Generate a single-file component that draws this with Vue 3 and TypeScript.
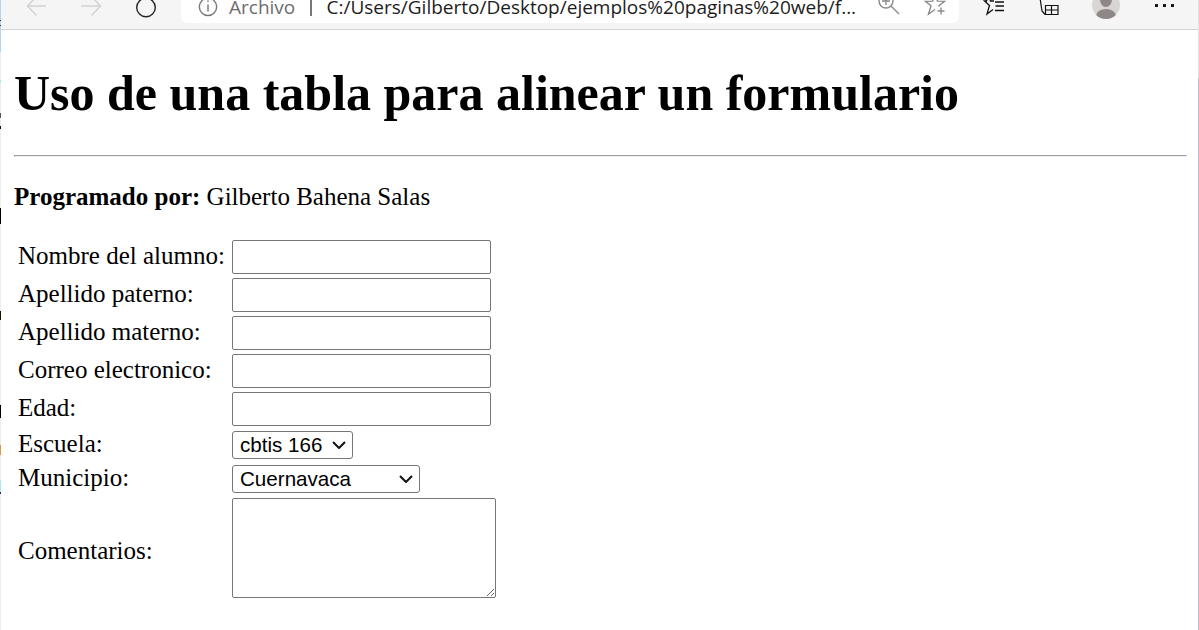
<script setup lang="ts">
interface Row { label: string }
const rows: Row[] = [
  { label: 'Nombre del alumno:' },
  { label: 'Apellido paterno:' },
  { label: 'Apellido materno:' },
  { label: 'Correo electronico:' },
  { label: 'Edad:' },
]
</script>

<template>
  <div class="window">
    <header class="toolbar">
      <svg class="ic nav back" width="26" height="29" viewBox="24 0 26 29"><path d="M46 6H28M36.500 -3.500L27.500 6l9 9.500" /></svg>
      <svg class="ic nav fwd" width="26" height="29" viewBox="78 0 26 29"><path d="M81 6h19M91.500 -3.500l9 9.500-9 9.500" /></svg>
      <svg class="ic reload" width="24" height="29" viewBox="134 0 24 29"><circle cx="146" cy="7.500" r="9.300" /></svg>
      <div class="omnibox">
        <svg class="ic info" width="24" height="29" viewBox="196 0 24 29"><circle cx="208" cy="6.800" r="8.700" /><path d="M208 4.500v7M208 0.500v1.600" /></svg>
        <span class="origin">Archivo</span>
        <span class="sep"></span>
        <span class="url">C:/Users/Gilberto/Desktop/ejemplos%20paginas%20web/f...</span>
        <svg class="ic zoom" width="25" height="29" viewBox="875 0 25 29"><circle cx="885" cy="1" r="7" /><path d="M890 6l8 8M885 -3v8M881 1h8" /></svg>
        <svg class="ic star" width="24" height="29" viewBox="922 0 24 29"><path d="M938.300 6.500L938 5.800L943.500 1.400L936.500 1.100L934 -5.500L931.500 1.100L924.500 1.400L930 5.800L927.500 14L934 9.500" /><path d="M940 7.500v7M936.500 11h7" /></svg>
      </div>
      <svg class="ic fav" width="25" height="29" viewBox="982 0 25 29"><path d="M994 1h-3.500L988.500 -6L986.500 1H984.500L989.500 5.500L987 14L993 9.500" /><path d="M995 2h9M995.500 6h8.500M995 10.500h9" /></svg>
      <svg class="ic coll" width="24" height="29" viewBox="1037 0 24 29"><path d="M1040 -2l2 13 3 3.500" /><path d="M1045.500 5.500h12.500v9h-12.500zM1051.500 6v8M1046 10h11.500" /></svg>
      <div class="avatar"><i class="head"></i><i class="body"></i></div>
      <div class="dots"><i></i><i></i><i></i></div>
    </header>

    <main class="page">
      <h1>Uso de una tabla para alinear un formulario</h1>
      <hr />
      <p class="byline"><b>Programado por:</b> Gilberto Bahena Salas</p>
      <form class="form">
        <label v-for="row in rows" :key="row.label" class="row">
          <span class="lab">{{ row.label }}</span>
          <input type="text" />
        </label>
        <label class="row sel">
          <span class="lab">Escuela:</span>
          <span class="select-wrap">
            <select class="narrow"><option>cbtis 166</option></select>
            <svg class="chev" width="14" height="8" viewBox="0 0 14 8"><path d="M1 1l6 6 6-6" /></svg>
          </span>
        </label>
        <label class="row sel">
          <span class="lab">Municipio:</span>
          <span class="select-wrap">
            <select class="wide"><option>Cuernavaca</option></select>
            <svg class="chev" width="14" height="8" viewBox="0 0 14 8"><path d="M1 1l6 6 6-6" /></svg>
          </span>
        </label>
        <label class="row area">
          <span class="lab">Comentarios:</span>
          <textarea></textarea>
        </label>
      </form>
    </main>
  </div>
</template>

<style>
html, body { margin: 0; background: #fff; overflow: hidden; }
</style>

<style scoped>
.window {
  position: relative;
  width: 1199px;
  height: 630px;
  overflow: hidden;
  box-sizing: border-box;
  padding: 0 1px;
  font-family: "Liberation Serif", serif;
  color: #000;
}
.window::before {
  content: "";
  position: absolute;
  left: 0;
  top: 0;
  width: 1px;
  height: 630px;
  background: linear-gradient(to bottom,
    #b3d4f0 0 20px, #333 20px 21px, #b3d4f0 21px 25px, #333 25px 26px, #b3d4f0 26px 52px,
    #eee 52px 80px, #a8ecf2 80px 83px, #eee 83px 113px, #555 113px 118px, #eee 118px 126px,
    #111 126px 129px, #eee 129px 208px, #000 208px 224px, #eee 224px 311px, #1a1000 311px 320px,
    #eee 320px 405px, #000 405px 418px, #eee 418px 445px, #d89a40 445px 455px, #eee 455px 480px,
    #a8ecf2 480px 492px, #234 492px 494px, #eee 494px 630px);
}
.window::after {
  content: "";
  position: absolute;
  right: 0;
  top: 0;
  width: 1px;
  height: 630px;
  background: linear-gradient(to bottom, #e6e2e2 0 78px, #b8bcc4 78px 630px);
}
.toolbar {
  height: 30px;
  box-sizing: border-box;
  border-bottom: 1px solid #d2d2d2;
  background: #f5f5f5;
  display: flex;
  align-items: flex-start;
  overflow: hidden;
}
.ic { flex: none; fill: none; stroke: #222; stroke-width: 1.4; }
.nav { stroke: #d2d2d2; }
.back { margin-left: 23px; }
.fwd { margin-left: 28px; }
.reload { margin-left: 30px; }
.omnibox {
  margin-left: 23px;
  width: 778px;
  height: 23px;
  background: #fff;
  border-radius: 0 0 6px 6px;
  display: flex;
  align-items: flex-start;
  font-family: "Open Sans", sans-serif;
  font-size: 19px;
  line-height: 14px;
  white-space: nowrap;
  flex: none;
}
.info { stroke: #777; margin-left: 15px; }
.origin { color: #6d6d6d; margin-left: 9px; width: 68px; flex: none; }
.sep { width: 1.5px; height: 16px; background: #777; margin-left: 13px; flex: none; }
.url { color: #1c1c1c; margin-left: 15px; width: 530px; flex: none; }
.zoom { stroke: #8a8a8a; margin-left: 19px; }
.star { stroke: #8a8a8a; margin-left: 22px; }
.fav { margin-left: 23px; stroke-width: 1.3; stroke: #111; }
.coll { margin-left: 30px; stroke-width: 1.2; stroke: #111; }
.avatar {
  margin-left: 31px;
  margin-top: -9px;
  width: 28px;
  height: 28px;
  border-radius: 50%;
  background: #d8d6d4;
  flex: none;
  overflow: hidden;
  display: flex;
  flex-direction: column;
  align-items: center;
}
.head { width: 12px; height: 16px; border-radius: 50%; background: #8d8886; flex: none; }
.body { width: 20px; height: 14px; border-radius: 50% 50% 45% 45%; background: #8d8886; margin-top: 2px; flex: none; }
.dots { display: flex; gap: 5px; margin-left: 35px; margin-top: 4px; }
.dots i { width: 3px; height: 3px; background: #1a1a1a; }

.page { padding: 0 11px 0 13px; }
h1 {
  margin: 35px 0 0;
  font-size: 50px;
  line-height: 57px;
  font-weight: 700;
}
hr {
  margin: 33px 0 0;
  height: 0;
  border-style: solid;
  border-width: 1px;
  border-color: #9d9d9d #eee #eee #9d9d9d;
}
.byline { margin: 25px 0 0; font-size: 25px; line-height: 29px; }
.form { margin-top: 29px; font-size: 25px; line-height: 29px; }
.row { display: flex; align-items: center; height: 34px; margin-bottom: 4px; }
.row:nth-child(5) { margin-bottom: 5px; }
.lab { width: 218px; padding-left: 4px; margin-bottom: 4px; box-sizing: border-box; flex: none; }
input {
  width: 259px;
  height: 34px;
  box-sizing: border-box;
  margin: 0;
  border: 1px solid #767676;
  border-radius: 2px;
  background: #fff;
}
.sel { height: 28px; margin-bottom: 6px; }
.select-wrap { position: relative; display: block; height: 28px; }
select {
  display: block;
  height: 28px;
  box-sizing: border-box;
  margin: 0;
  padding: 0 0 2px 7px;
  appearance: none;
  font-family: "Liberation Sans", sans-serif;
  font-size: 20.6px;
  border: 1px solid #767676;
  border-radius: 3px;
  background: #fff;
  color: #000;
}
select.narrow { width: 121px; }
select.wide { width: 188px; }
.chev { position: absolute; right: 7px; top: 10px; fill: none; stroke: #111; stroke-width: 2; pointer-events: none; }
.area { height: 100px; margin: -1px 0 0; }
.area .lab { margin-bottom: 0; margin-top: 4px; }
textarea {
  width: 264px;
  height: 100px;
  box-sizing: border-box;
  margin: 0;
  border: 1px solid #767676;
  border-radius: 2px;
  background: #fff;
}
</style>
